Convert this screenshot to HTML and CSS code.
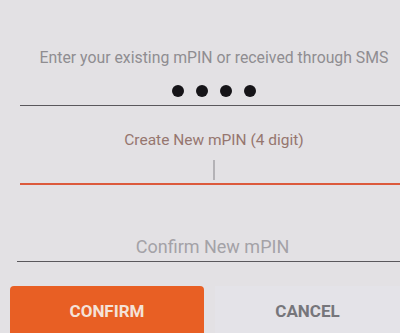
FILE: index.html
```html
<!DOCTYPE html>
<html lang="en">
<head>
  <meta charset="UTF-8" />
  <title>Change mPIN</title>
  <link rel="stylesheet" href="styles.css">
</head>
<body>

<div id="form">
  <div class="field old">
    <div class="label">Enter your existing mPIN or received through SMS</div>
    <div class="dots"><span></span><span></span><span></span><span></span></div>
  </div>

  <div class="field new active">
    <div class="label">Create New mPIN (4 digit)</div>
    <div class="cursor"></div>
  </div>

  <div class="field confirm">
    <div class="label">Confirm New mPIN</div>
  </div>
</div>

<div id="actions">
  <button class="btn primary">CONFIRM</button>
  <button class="btn plain">CANCEL</button>
</div>

</body>
</html>
```

FILE: styles.css
```css
body {
  margin: 0;
  height: 333px;
  overflow: hidden;
  font-family: Roboto, "Liberation Sans", sans-serif;
  background: #e3e1e4;
}

#form {
  margin-left: 20px;
  width: 388px;
  padding-top: 48px;
}

.field {
  display: flex;
  flex-direction: column;
  align-items: center;
  border-bottom: 1px solid #5a585c;
}

.label {
  color: #8f8d91;
  font-size: 15.8px;
  line-height: 20px;
}

.old {
  height: 57px;
}

.dots {
  display: flex;
  gap: 12px;
  margin-top: 17px;
}

.dots span {
  width: 12px;
  height: 12px;
  border-radius: 50%;
  background: #161418;
}

.new {
  margin-top: 24px;
  height: 53px;
  border-bottom: 2px solid #dc5a3c;
}

.new .label {
  color: #96766f;
  font-size: 15.5px;
}

.cursor {
  width: 2px;
  height: 20px;
  margin-top: 10px;
  background: #b4b2b6;
}

.confirm {
  margin-top: 52px;
  margin-left: -3px;
  height: 24px;
  justify-content: flex-end;
}

.confirm .label {
  color: #a4a2a7;
  font-size: 18px;
  margin-bottom: 4px;
}

#actions {
  display: flex;
  gap: 11px;
  margin-top: 24px;
  padding-left: 10px;
}

.btn {
  height: 52px;
  border: none;
  border-radius: 4px;
  font-family: Roboto, sans-serif;
  font-weight: bold;
  font-size: 17px;
  padding-bottom: 4px;
}

.primary {
  width: 194px;
  background: #e85f24;
  color: #f4e2d8;
}

.plain {
  flex-grow: 1;
  background: #e4e3e8;
  color: #76767b;
  border-radius: 0;
}
```
